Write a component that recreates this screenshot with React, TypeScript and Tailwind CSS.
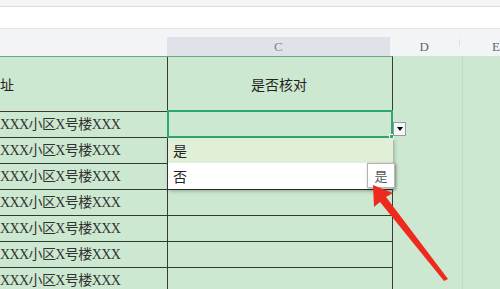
import React from 'react';

const ROWS = 7;

export default function App() {
  return (
    <div
      className="relative w-[500px] h-[289px] overflow-hidden bg-[#cde8d0] text-[#222]"
      style={{ fontFamily: '"Liberation Serif", "Noto Sans CJK SC", serif' }}
    >
      {/* toolbar strips */}
      <div className="h-[7px] bg-[#f4f5f7] border-b border-[#dcdfe4]" />
      <div className="h-[22px] bg-white border-b border-[#e3e5e9]" />

      {/* column header */}
      <div className="flex h-[27px] bg-[#f3f4f6]">
        <div className="w-[168px]" />
        <div className="w-[224px] mt-[8px] bg-[#e0e2e9] flex items-center justify-center text-[13px] text-[#7a8a8a]">
          C
        </div>
        <div className="w-[70px] flex items-center justify-center text-[13px] text-[#666] pt-[8px]">D</div>
        <div className="w-px my-[10px] bg-[#dfe1e5]" />
        <div className="flex-1 flex items-center pl-[32px] text-[13px] text-[#666] pt-[8px]">E</div>
      </div>

      {/* body */}
      <div className="flex">
        <div className="w-[393px] border-t border-r border-t-[#6ba77c] border-r-[#3a3a3a]">
          {/* title row */}
          <div className="flex h-[55px] border-b border-[#3a3a3a]">
            <div className="w-[168px] border-r border-[#3a3a3a] flex items-center text-[14px]" style={{ fontFamily: '"Noto Sans CJK SC", sans-serif' }}>
              址
            </div>
            <div className="flex-1 flex items-center justify-center text-[14px] pr-[2px]" style={{ fontFamily: '"Noto Sans CJK SC", sans-serif' }}>
              是否核对
            </div>
          </div>
          {Array.from({ length: ROWS }).map((_, i) => (
            <div key={i} className="flex h-[26px] border-b border-[#2f3a32]">
              <div className="w-[168px] border-r border-[#3a3a3a] flex items-center overflow-hidden whitespace-nowrap text-[14px] text-[#333]">
                <span className="tracking-[-0.6px]">XXX小区X号楼XXX</span>
              </div>
              <div className="flex-1" />
            </div>
          ))}
        </div>
        <div className="w-[69px]" />
        <div className="w-px bg-[#c4dcc8]" />
        <div className="flex-1" />
      </div>

      {/* selected cell */}
      <div className="absolute left-[167px] top-[110px] w-[226px] h-[28px] border-2 border-[#2fa86e]" />
      <div className="absolute left-[389px] top-[134px] w-[5px] h-[5px] bg-[#2fa86e] border border-white" />

      {/* dropdown button */}
      <div className="absolute left-[393px] top-[122px] w-[13px] h-[14px] bg-[#f7f7f7] border border-[#9a9a9a] flex items-center justify-center">
        <div className="w-0 h-0 border-l-[3.5px] border-r-[3.5px] border-t-[4px] border-l-transparent border-r-transparent border-t-black" />
      </div>

      {/* dropdown list */}
      <div
        className="absolute left-[168px] top-[138px] w-[225px] h-[51px] bg-white shadow-[1px_2px_4px_rgba(0,0,0,0.3)] text-[14px]"
        style={{ fontFamily: '"Noto Sans CJK SC", sans-serif' }}
      >
        <div className="h-[25px] bg-[#e1efd9] flex items-center pl-[5px]">是</div>
        <div className="h-[26px] flex items-center pl-[5px]">否</div>
      </div>

      {/* tooltip */}
      <div
        className="absolute left-[367px] top-[163px] w-[28px] h-[25px] bg-white border border-[#b5b5b5] shadow-[1px_1px_3px_rgba(0,0,0,0.35)] flex items-center justify-center text-[13px] text-[#555]"
        style={{ fontFamily: '"Noto Sans CJK SC", sans-serif' }}
      >
        是
      </div>

      {/* red arrow */}
      <svg className="absolute left-0 top-0" width="500" height="289" viewBox="0 0 500 289">
        <polygon
          points="373,185 374,207 380,202 444,281 448,279 386,197 393,193"
          fill="#ee2a1f"
        />
      </svg>
    </div>
  );
}
